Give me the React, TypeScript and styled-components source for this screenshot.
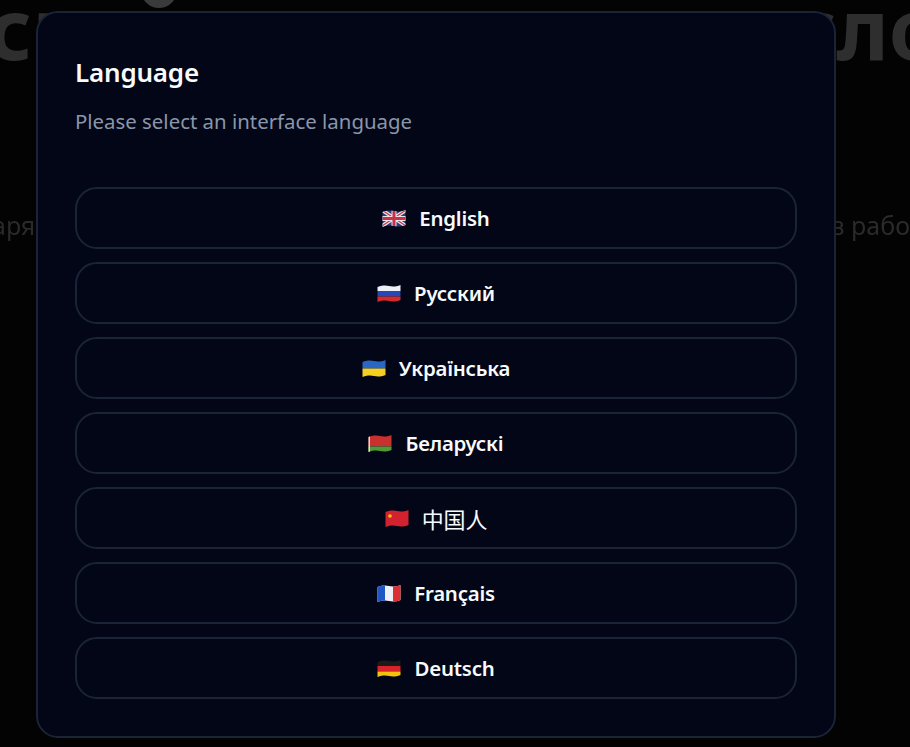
import React from "react";
import styled, { createGlobalStyle } from "styled-components";

const Global = createGlobalStyle`
  html, body { margin: 0; padding: 0; height: 100%; background: #030303; overflow: hidden; }
  #root { height: 100%; }
  * { box-sizing: border-box; }
`;

const Page = styled.div`
  position: relative;
  width: 910px;
  height: 747px;
  overflow: hidden;
  font-family: "Noto Sans", "Open Sans", "Noto Sans CJK SC", sans-serif;
  filter: blur(0.4px);
`;

const Backdrop = styled.div`
  display: flex;
  flex-direction: column;
  align-items: stretch;
  height: 100%;
  color: #2e2e2e;
`;

const LogoBit = styled.div`
  width: 36px;
  height: 36px;
  margin: -28px 0 0 141px;
  border-radius: 50%;
  background: #3a3a3a;
`;

const HeroTitle = styled.div`
  display: flex;
  justify-content: space-between;
  margin: -25px -31px 0 -12px;
  font-size: 84px;
  line-height: 90px;
  font-weight: 700;
`;

const HeroText = styled.div`
  display: flex;
  justify-content: space-between;
  margin: 136px 0 0 -8px;
  font-size: 25px;
  line-height: 32px;
  color: #2a2a2a;
`;

const Overlay = styled.div`
  position: absolute;
  inset: 0;
  display: flex;
  align-items: flex-start;
  padding: 11px 0 0 36px;
`;

const Dialog = styled.section`
  width: 800px;
  height: 727px;
  padding: 39px 37px 37px;
  display: flex;
  flex-direction: column;
  background: #020617;
  border: 2px solid #1a2436;
  border-radius: 22px;
`;

const Title = styled.h2`
  margin: 0;
  font-size: 26px;
  line-height: 40px;
  font-weight: 600;
  color: #f8fafc;
  letter-spacing: -0.2px;
`;

const Description = styled.p`
  margin: 14px 0 0;
  font-size: 20.4px;
  line-height: 30px;
  color: #8a96a9;
`;

const List = styled.div`
  margin-top: 51px;
  display: flex;
  flex-direction: column;
  gap: 13px;
`;

const LangButton = styled.button`
  height: 62px;
  display: flex;
  align-items: center;
  justify-content: center;
  gap: 13px;
  background: transparent;
  border: 2px solid #1a2436;
  border-radius: 22px;
  color: #f8fafc;
  font: inherit;
  font-size: 20.4px;
  font-weight: 600;
  padding: 0;
`;

const FlagSvg = styled.svg`
  width: 24px;
  height: 19px;
  flex: none;
  display: block;
`;

const Wave = "M0.5 3 C6 1 9 1.2 12 2 C15 2.8 19 2.8 23.5 1 V16 C19 17.8 15 17.8 12 17 C9 16.2 6 16 0.5 18 Z";

type Stripe = { y: number; h: number; fill: string };

function Flag({ id, stripes, children }: { id: string; stripes: Stripe[]; children?: React.ReactNode }) {
  return (
    <FlagSvg viewBox="0 0 24 19" aria-hidden="true">
      <defs>
        <clipPath id={id}>
          <path d={Wave} />
        </clipPath>
      </defs>
      <g clipPath={`url(#${id})`}>
        {stripes.map((s, i) => (
          <rect key={i} x="0" y={s.y} width="24" height={s.h} fill={s.fill} />
        ))}
        {children}
      </g>
    </FlagSvg>
  );
}

const languages: { label: string; flag: React.ReactNode; cjk?: boolean }[] = [
  {
    label: "English",
    flag: (
      <Flag id="gb" stripes={[{ y: 0, h: 19, fill: "#2b3f7e" }]}>
        <path d="M0 1 L24 17 M24 1 L0 17" stroke="#e8e4e8" strokeWidth="3.6" />
        <path d="M0 1 L24 17 M24 1 L0 17" stroke="#c43a4e" strokeWidth="1.2" />
        <path d="M12 0 V19 M0 9.5 H24" stroke="#e8e4e8" strokeWidth="5" />
        <path d="M12 0 V19 M0 9.5 H24" stroke="#c9304a" strokeWidth="3" />
      </Flag>
    ),
  },
  {
    label: "Русский",
    flag: (
      <Flag
        id="ru"
        stripes={[
          { y: 0, h: 7, fill: "#eceff4" },
          { y: 7, h: 5.5, fill: "#2746b8" },
          { y: 12.5, h: 7, fill: "#d42a2a" },
        ]}
      />
    ),
  },
  {
    label: "Українська",
    flag: (
      <Flag
        id="ua"
        stripes={[
          { y: 0, h: 9.5, fill: "#2a66c4" },
          { y: 9.5, h: 10, fill: "#f5d020" },
        ]}
      />
    ),
  },
  {
    label: "Беларускі",
    flag: (
      <Flag
        id="by"
        stripes={[
          { y: 0, h: 12.5, fill: "#c8312d" },
          { y: 12.5, h: 7, fill: "#4f9a35" },
        ]}
      >
        <rect x="0" y="0" width="2" height="19" fill="#e9d7d0" />
      </Flag>
    ),
  },
  {
    label: "中国人",
    cjk: true,
    flag: (
      <Flag id="cn" stripes={[{ y: 0, h: 19, fill: "#d3222f" }]}>
        <circle cx="5" cy="7" r="1.8" fill="#f5c518" />
      </Flag>
    ),
  },
  {
    label: "Français",
    flag: (
      <Flag id="fr" stripes={[{ y: 0, h: 19, fill: "#eef0f5" }]}>
        <rect x="0" y="0" width="8" height="19" fill="#1f56c4" />
        <rect x="16" y="0" width="8" height="19" fill="#dc2f35" />
      </Flag>
    ),
  },
  {
    label: "Deutsch",
    flag: (
      <Flag
        id="de"
        stripes={[
          { y: 0, h: 7, fill: "#1a1a1a" },
          { y: 7, h: 5.5, fill: "#d8232a" },
          { y: 12.5, h: 7, fill: "#f4c20d" },
        ]}
      />
    ),
  },
];

const LabelText = styled.span<{ $cjk?: boolean }>`
  font-weight: ${(p) => (p.$cjk ? 400 : 600)};
  font-size: ${(p) => (p.$cjk ? "22px" : "inherit")};
  letter-spacing: -0.2px;
`;

export default function App() {
  return (
    <Page>
      <Global />
      <Backdrop aria-hidden="true">
        <LogoBit />
        <HeroTitle>
          <span>сп</span>
          <span>сло</span>
        </HeroTitle>
        <HeroText>
          <span>аря</span>
          <span>в рабо</span>
        </HeroText>
      </Backdrop>
      <Overlay>
        <Dialog>
          <Title>Language</Title>
          <Description>Please select an interface language</Description>
          <List>
            {languages.map((l) => (
              <LangButton key={l.label}>
                {l.flag}
                <LabelText $cjk={l.cjk}>{l.label}</LabelText>
              </LangButton>
            ))}
          </List>
        </Dialog>
      </Overlay>
    </Page>
  );
}
